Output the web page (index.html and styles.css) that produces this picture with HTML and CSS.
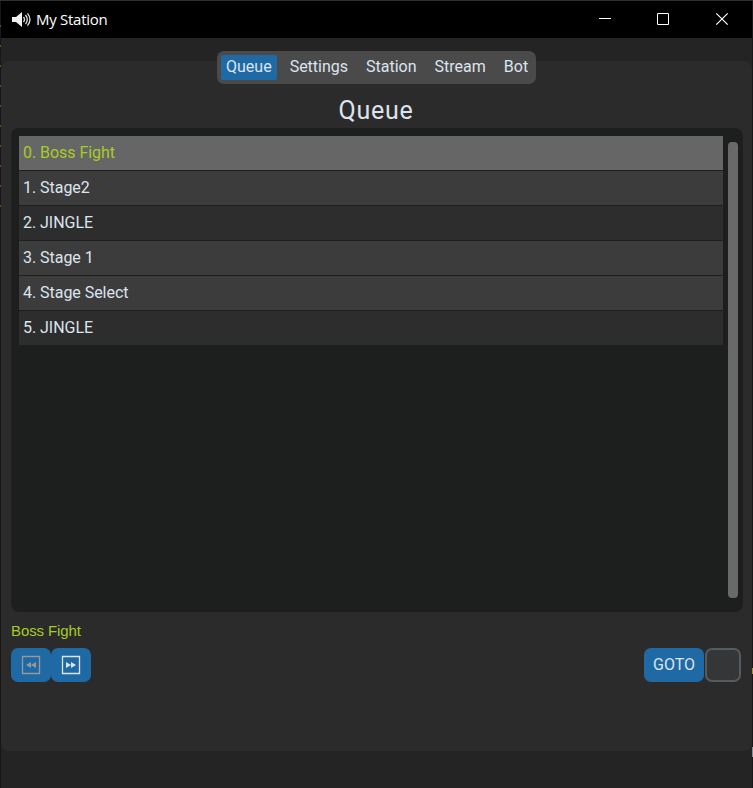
FILE: index.html
```html
<!DOCTYPE html>
<html lang="en">
<head>
<meta charset="utf-8">
<title>My Station</title>
<link rel="stylesheet" href="styles.css">
</head>
<body>
<div class="window">
  <header class="titlebar">
    <svg class="speaker" width="20" height="16" viewBox="0 0 20 16">
      <path d="M1 5h4l6-5v15l-6-5H1z" fill="#f0f0f0"/>
      <path d="M12.500 5q2 2.500 0 5M14.500 3q3.500 4.500 0 9M16.500 1.300q5 6.200 0 12.400" fill="none" stroke="#ddd" stroke-width="1.300"/>
    </svg>
    <span class="caption">My Station</span>
    <svg class="controls" width="132" height="14" viewBox="0 0 132 14" fill="none" stroke="#fff">
      <path d="M1 6.500h12"/>
      <path d="M59.500 1.500h11v11h-11z"/>
      <path d="M118.300 1.300l11.400 11.400M129.700 1.300L118.300 12.700" stroke-width="1.200"/>
    </svg>
  </header>
  <main class="frame">
    <nav class="tabs">
      <button class="tab active">Queue</button>
      <button class="tab">Settings</button>
      <button class="tab">Station</button>
      <button class="tab">Stream</button>
      <button class="tab">Bot</button>
    </nav>
    <h1>Queue</h1>
    <section class="list">
      <div class="rows">
        <div class="row current">0. Boss Fight</div>
        <div class="row">1. Stage2</div>
        <div class="row jingle">2. JINGLE</div>
        <div class="row">3. Stage 1</div>
        <div class="row">4. Stage Select</div>
        <div class="row jingle">5. JINGLE</div>
      </div>
      <div class="scrollbar"></div>
    </section>
    <p class="playing">Boss Fight</p>
    <div class="actions">
      <button class="btn icon off" aria-label="Previous"><svg width="20" height="20" viewBox="0 0 20 20"><path d="M1.500 1.500h17v17h-17z" fill="none" stroke="currentColor" stroke-width="1.300"/><path d="M10 7v6l-5-3zM15 7v6l-5-3z" fill="currentColor"/></svg></button>
      <button class="btn icon" aria-label="Next"><svg width="20" height="20" viewBox="0 0 20 20"><path d="M1.500 1.500h17v17h-17z" fill="none" stroke="currentColor" stroke-width="1.300"/><path d="M5 7v6l5-3zM10 7v6l5-3z" fill="currentColor"/></svg></button>
      <button class="btn goto">GOTO</button>
      <input class="entry" type="text">
    </div>
  </main>
</div>
</body>
</html>
```
FILE: styles.css
```css
* { box-sizing: border-box; }
body {
  margin: 0;
  height: 788px;
  padding: 1px 1px 0;
  overflow: hidden;
  background:
    repeating-linear-gradient(#804000 0 2px, transparent 2px 20px) 0 25px / 1px 184px no-repeat,
    linear-gradient(#a09030, #a09030) 752px 668px / 1px 6px no-repeat,
    linear-gradient(#809098, #809098) 752px 747px / 1px 10px no-repeat,
    linear-gradient(#303030, #303030) 0 0 / 753px 1px no-repeat,
    #171719;
  font-family: Roboto, "Liberation Sans", sans-serif;
  color: #dce4ee;
}
.window {
  height: 787px;
  background: #242424;
}
.titlebar {
  display: flex;
  align-items: center;
  height: 37px;
  padding: 0 22px 0 10px;
  background: #000;
  color: #fff;
}
.speaker { margin-right: 5px; }
.caption {
  margin-top: -2px;
  font: 15px/20px "Open Sans", "Noto Sans", sans-serif;
  letter-spacing: -0.28px;
}
.controls { margin: -1px 0 0 auto; }
.frame {
  display: flex;
  flex-direction: column;
  height: 690px;
  margin-top: 23px;
  padding: 0 9px 0 10px;
  border-radius: 8px;
  background: #2b2b2b;
}
button {
  border: 0;
  padding: 0;
  font: inherit;
  color: inherit;
}
.tabs {
  display: flex;
  align-self: center;
  flex: none;
  width: 319px;
  height: 33px;
  margin: -10px 1px 0 0;
  padding: 4px;
  border-radius: 7px;
  background: #4a4a4a;
}
.tab {
  height: 25px;
  padding: 0 5px 2px;
  margin-right: 8px;
  border-radius: 2px;
  background: none;
  font-size: 16px;
  line-height: 23px;
  white-space: nowrap;
}
.tab:last-child { margin-right: 0; }
.tab.active { background: #1f6aa5; }
h1 {
  margin: 11px 2px 1px 0;
  font-size: 25px;
  font-weight: 400;
  letter-spacing: 0.7px;
  line-height: 32px;
  text-align: center;
}
.list {
  display: flex;
  flex: none;
  justify-content: space-between;
  height: 484px;
  padding: 8px 5px 0 8px;
  border-radius: 8px;
  background: #1d1f1e;
}
.rows { width: 704px; }
.row {
  height: 34px;
  margin-bottom: 1px;
  padding-left: 4px;
  background: #3c3c3c;
  font-size: 16px;
  letter-spacing: -0.04px;
  line-height: 33px;
}
.row.current { background: #666; color: #a6cc26; }
.row.jingle { background: #2d2d2d; }
.scrollbar {
  width: 10px;
  height: 456px;
  margin-top: 6px;
  border-radius: 4px;
  background: #696969;
}
.playing {
  margin: 9px 0 8px;
  color: #a6cc26;
  font: 15px/19px "Liberation Sans", sans-serif;
  letter-spacing: -0.1px;
}
.actions {
  display: flex;
  height: 34px;
  padding-right: 2px;
}
.btn {
  border-radius: 7px;
  background: #1f6aa5;
}
.icon {
  display: grid;
  place-items: center;
  width: 40px;
  padding-bottom: 1px;
}
.off { color: #999; }
.goto {
  width: 60px;
  margin-left: auto;
  padding-bottom: 2px;
  font-size: 16px;
}
.entry {
  width: 36px;
  margin-left: 1px;
  border: 2px solid #565b5e;
  border-radius: 7px;
  background: #343638;
}
```
